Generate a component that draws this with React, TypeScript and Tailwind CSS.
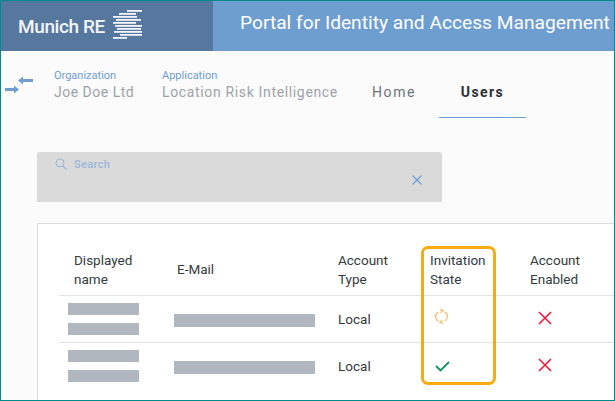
import React from "react";

function Cross() {
  return (
    <svg width="14" height="14" viewBox="0 0 14 14" fill="none" className="block -mt-[2px]">
      <path d="M1 1 L13 13 M13 1 L1 13" stroke="#f0193c" strokeWidth="1.6" />
    </svg>
  );
}

function Check() {
  return (
    <svg width="15" height="11" viewBox="0 0 15 11" fill="none" className="block">
      <path d="M1 5 L5.5 9.5 L14 1" stroke="#12945f" strokeWidth="1.8" />
    </svg>
  );
}

function Sync() {
  return (
    <svg width="13" height="15" viewBox="0 0 13 15" fill="none" className="block -mt-[5px]">
      <path d="M3.2 2.9 A5.3 5.3 0 0 0 3.4 12.1" stroke="#f9bb62" strokeWidth="1.2" />
      <path d="M9.8 12.1 A5.3 5.3 0 0 0 9.6 2.9" stroke="#f9bb62" strokeWidth="1.2" />
      <path d="M5 0.6 L8.2 1.6 L5.6 3.9" stroke="#f9bb62" strokeWidth="1.2" />
      <path d="M8 14.4 L4.8 13.4 L7.4 11.1" stroke="#f9bb62" strokeWidth="1.2" />
    </svg>
  );
}

function Logo() {
  const bars: [number, number, number][] = [
    [14, 0, 15],
    [6, 3, 17],
    [0, 6, 24],
    [3, 9, 25],
    [0, 12, 23],
    [2, 15, 27],
    [4, 18, 24],
    [1, 21, 28],
    [7, 24, 22],
    [0, 27, 14],
  ];
  return (
    <svg width="29" height="29" viewBox="0 0 29 29" className="block">
      {bars.map(([x, y, w], i) => (
        <rect key={i} x={x} y={y} width={w} height="1.8" fill="#f2f5f9" />
      ))}
    </svg>
  );
}

function Row({ icon, last }: { icon: React.ReactNode; last?: boolean }) {
  return (
    <div className={`grid h-[47px] grid-cols-[115px_164px_92px_100px_1fr] items-center border-b ${last ? "border-transparent" : "border-[#e3e3e3]"}`}>
      <div className="flex flex-col gap-2 pl-[9px]">
        <div className="h-3 w-[71px] bg-[#b0b7bf]" />
        <div className="h-3 w-[71px] bg-[#b0b7bf]" />
      </div>
      <div className="pt-[3px]">
        <div className="h-[13px] w-[141px] bg-[#b0b7bf]" />
      </div>
      <div className="pt-[1px] text-[13.5px] text-[#333a42]">Local</div>
      <div className="pl-[5px]">{icon}</div>
      <div className="pl-[8px]"><Cross /></div>
    </div>
  );
}

export default function App() {
  return (
    <div className="relative h-[401px] w-[615px] overflow-hidden border border-[#008b8b] bg-[#fbfbfb] font-['Roboto',sans-serif]">
      <header className="flex h-[50px] bg-[#6e9dd0]">
        <div className="flex w-[212px] shrink-0 items-center bg-[#56779e] pl-[17px]">
          <span className="text-[19px] leading-none font-medium tracking-[-0.4px] text-[#f2f5f9]">Munich RE</span>
          <span className="-mt-[4px] ml-[8px]"><Logo /></span>
        </div>
        <div className="flex flex-1 items-center pb-[5px] pl-[27px] text-[19.2px] whitespace-nowrap text-white">
          Portal for Identity and Access Management
        </div>
      </header>

      <nav className="flex h-[67px] items-start">
        <svg width="28" height="20" viewBox="0 0 28 20" fill="none" className="mt-[24px] ml-[4px] block">
          <path d="M17 5.5 H28 M0 14.5 H10" stroke="#6e9dd0" strokeWidth="2.8" />
          <path d="M18 1.5 L13 5.5 L18 9.5 Z" fill="#6e9dd0" />
          <path d="M9 10.5 L14 14.5 L9 18.5 Z" fill="#6e9dd0" />
        </svg>
        <div className="mt-[18px] ml-[21px] w-[108px]">
          <div className="text-[11px] leading-[13px] text-[#6e9dd0]">Organization</div>
          <div className="mt-px text-[14px] leading-[18px] tracking-[0.5px] text-[#9ea3a9]">Joe Doe Ltd</div>
        </div>
        <div className="mt-[18px] w-[210px]">
          <div className="text-[11px] leading-[13px] text-[#6e9dd0]">Application</div>
          <div className="mt-px text-[14px] leading-[18px] tracking-[0.65px] whitespace-nowrap text-[#9ea3a9]">Location Risk Intelligence</div>
        </div>
        <div className="mt-[32px] w-[67px] text-[14px] leading-[18px] tracking-[1.6px] text-[#6c737b]">Home</div>
        <div className="flex h-[67px] w-[87px] flex-col items-center">
          <div className="mt-[32px] text-[14px] leading-[18px] font-bold tracking-[1.4px] text-[#2a3038]">Users</div>
          <div className="mt-[16px] h-px w-full bg-[#6e9dd0]" />
        </div>
      </nav>

      <main className="pt-[34px] pl-[36px]">
        <div className="relative h-[50px] w-[405px] rounded-t-[3px] bg-[#dadada]">
          <div className="flex items-center pt-[5px] pl-[18px] text-[11px] leading-[16px] font-medium tracking-[0.35px] text-[#9bb9dc]">
            <svg width="12" height="12" viewBox="0 0 12 12" fill="none" className="-mt-[3px] mr-[7px] block">
              <circle cx="5" cy="5" r="4" stroke="#9bb9dc" strokeWidth="1" />
              <path d="M8 8 L11.5 11.5" stroke="#9bb9dc" strokeWidth="1.2" />
            </svg>
            Search
          </div>
          <svg width="10" height="10" viewBox="0 0 10 10" fill="none" className="absolute top-[23px] right-[20px] block">
            <path d="M0.5 0.5 L9.5 9.5 M9.5 0.5 L0.5 9.5" stroke="#6e9dd0" strokeWidth="1.2" />
          </svg>
        </div>

        <section className="mt-[21px] h-[200px] w-[640px] border border-[#dcdcdc] bg-white pt-[22px] pl-[21px]">
          <div className="grid h-[50px] grid-cols-[115px_164px_92px_100px_1fr] items-center border-b border-[#e3e3e3] pb-[2px] text-[13.5px] leading-[19px] text-[#333a42]">
            <div className="pl-[15px]">Displayed<br />name</div>
            <div className="pl-[3px]">E-Mail</div>
            <div>Account<br />Type</div>
            <div>Invitation<br />State</div>
            <div>Account<br />Enabled</div>
          </div>
          <Row icon={<Sync />} />
          <Row icon={<Check />} last />
        </section>
      </main>

      <div className="absolute top-[245px] left-[420px] h-[139px] w-[75px] rounded-[7px] border-[3px] border-[#f9ab0d]" />
    </div>
  );
}
